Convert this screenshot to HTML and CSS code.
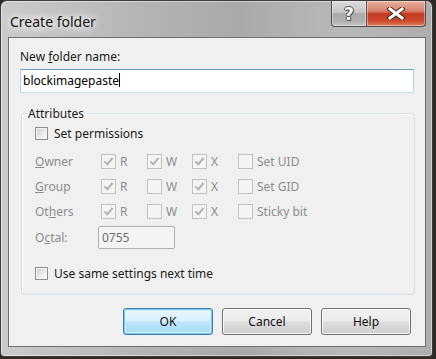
FILE: index.html
```html
<!DOCTYPE html>
<html lang="en">
<head>
  <meta charset="UTF-8" />
  <title>Create folder</title>
  <link rel="stylesheet" href="styles.css">
</head>
<body>
  <div class="window">
    <div class="titlebar">
      <span class="title">Create folder</span>
      <div class="caption-buttons">
        <span class="cap-btn help-btn">?</span>
        <span class="cap-btn close-btn">
          <svg width="20" height="13" viewBox="0 0 20 13">
            <path d="M4 2 L16 11 M16 2 L4 11" stroke="#4a2a22" stroke-width="5" stroke-linecap="square" fill="none"/>
            <path d="M4 2 L16 11 M16 2 L4 11" stroke="#fff" stroke-width="3" stroke-linecap="square" fill="none"/>
          </svg>
        </span>
      </div>
    </div>

    <div class="client">
      <div class="field-label">New <u>f</u>older name:</div>
      <div class="textbox focused">blockimagepaste<span class="caret"></span></div>

      <fieldset class="group">
        <legend>Attributes</legend>
        <label class="check"><span class="box"></span>Set permissions</label>

        <div class="perm-grid">
          <span class="row-label"><u>O</u>wner</span>
          <label class="check disabled"><span class="box checked"></span>R</label>
          <label class="check disabled"><span class="box checked"></span>W</label>
          <label class="check disabled"><span class="box checked"></span>X</label>
          <label class="check disabled"><span class="box"></span>Set UID</label>

          <span class="row-label"><u>G</u>roup</span>
          <label class="check disabled"><span class="box checked"></span>R</label>
          <label class="check disabled"><span class="box"></span>W</label>
          <label class="check disabled"><span class="box checked"></span>X</label>
          <label class="check disabled"><span class="box"></span>Set GID</label>

          <span class="row-label">Ot<u>h</u>ers</span>
          <label class="check disabled"><span class="box checked"></span>R</label>
          <label class="check disabled"><span class="box"></span>W</label>
          <label class="check disabled"><span class="box checked"></span>X</label>
          <label class="check disabled"><span class="box"></span>Sticky bit</label>
        </div>

        <div class="octal-row">
          <span class="row-label">O<u>c</u>tal:</span>
          <div class="textbox octal">0755</div>
        </div>

        <label class="check same-settings"><span class="box"></span>Use same settings next time</label>
      </fieldset>

      <div class="buttons">
        <button class="btn default">OK</button>
        <button class="btn">Cancel</button>
        <button class="btn">Help</button>
      </div>
    </div>
  </div>
</body>
</html>
```

FILE: styles.css
```css
body {
  margin: 0;
  background: #2e2a26;
  font-family: "Noto Sans", "Open Sans", sans-serif;
  font-size: 12px;
  color: #1a1a1a;
}
.window {
  width: 433px;
  height: 357px;
  box-sizing: border-box;
  border: 1px solid #3c3c3c;
  border-radius: 7px 7px 4px 4px;
  background: linear-gradient(to right, #cbcbcb, #b3b3b3 35%, #a9a9a9 55%, #b9b9b9 80%, #adadad);
  box-shadow: inset 0 0 0 1px rgba(255,255,255,0.45);
  padding: 0 6px 9px 7px;
  display: flex;
  flex-direction: column;
}
.titlebar {
  height: 36px;
  display: flex;
  justify-content: space-between;
  align-items: flex-start;
}
.title {
  padding: 10px 0 0 2px;
  font-size: 14px;
  line-height: 21px;
  color: #111;
  text-shadow: 0 0 6px #fff, 0 0 10px #fff, 0 0 16px #f2f2f2;
}
.caption-buttons {
  display: flex;
  height: 26px;
}
.cap-btn {
  display: flex;
  align-items: center;
  justify-content: center;
  box-sizing: border-box;
  height: 26px;
  border: 1px solid #4e4e4e;
  border-top: none;
  box-shadow: inset 0 0 0 1px rgba(255,255,255,0.4);
}
.help-btn {
  width: 35px;
  border-radius: 0 0 0 4px;
  border-right: none;
  background: linear-gradient(#dcdcdc, #c6c6c6 45%, #a9a9a9 52%, #b3b3b3 85%, #c9c9c9);
  color: #f4f4f4;
  font-family: "DejaVu Sans", sans-serif;
  font-weight: bold;
  font-size: 17px;
  text-shadow: 1px 0 #555, -1px 0 #555, 0 1px #555, 0 -1px #555, 1px 1px #666;
}
.close-btn {
  width: 60px;
  border-radius: 0 0 4px 0;
  background: linear-gradient(#e9b2a2, #d8806a 40%, #c0381f 52%, #cc4a2d 80%, #df8163);
}

.client {
  flex: 1;
  border: 1px solid #6e6e6e;
  background: #f0f0f0;
  padding: 11px 0 0 11px;
}
.field-label {
  line-height: 15px;
}
.textbox {
  box-sizing: border-box;
  height: 24px;
  line-height: 22px;
  padding-left: 2px;
  background: #fff;
  border: 1px solid #abadb3;
}
.textbox.focused {
  width: 394px;
  margin: 5px 0 13px;
  border-color: #6d9dcb #b9d3ea #c3dbef;
  color: #000;
}
.caret {
  display: inline-block;
  width: 1px;
  height: 14px;
  background: #000;
  vertical-align: -2px;
}

.group {
  width: 394px;
  box-sizing: border-box;
  margin: 0 0 0 1px;
  padding: 5px 0 13px 13px;
  border: 1px solid #d5dfe5;
  border-radius: 3px;
  box-shadow: inset 1px 1px 0 #fcfcfc;
}
.group legend {
  padding: 0 2px;
  margin-left: -9px;
  line-height: 15px;
}
.check {
  display: flex;
  align-items: center;
  line-height: 15px;
}
.box {
  position: relative;
  box-sizing: border-box;
  width: 13px;
  height: 13px;
  margin-right: 6px;
  border: 1px solid #8e8f8f;
  background: linear-gradient(135deg, #cfcfcf, #f2f2f2 70%, #fdfdfd);
  box-shadow: inset 0 0 0 1px #f4f4f4;
}
.check.disabled {
  color: #8d8d8d;
}
.check.disabled .box {
  width: 15px;
  height: 15px;
  margin-right: 4px;
  border-color: #c2c2c2;
  background: #f4f4f4;
  box-shadow: none;
}
.box.checked::after {
  content: "";
  position: absolute;
  left: 4px;
  top: 1px;
  width: 3px;
  height: 7px;
  border: solid #b4b4b4;
  border-width: 0 2px 2px 0;
  transform: rotate(40deg);
}
.perm-grid {
  display: grid;
  grid-template-columns: 66px 46px 45px 46px auto;
  grid-auto-rows: 25px;
  align-items: center;
  margin-top: 8px;
}
.row-label {
  color: #8d8d8d;
}
.octal-row {
  display: flex;
  align-items: center;
  margin-top: 2px;
}
.octal-row .row-label {
  width: 63px;
}
.textbox.octal {
  width: 77px;
  height: 23px;
  line-height: 21px;
  padding-left: 3px;
  background: #f4f4f4;
  border-color: #b0b0b0;
  border-radius: 2px;
  color: #6d6d6d;
}
.same-settings {
  margin-top: 17px;
}

.buttons {
  display: flex;
  justify-content: flex-end;
  gap: 9px;
  padding-right: 14px;
  margin-top: 13px;
}
.btn {
  width: 90px;
  height: 27px;
  font-family: "Noto Sans", "Open Sans", sans-serif;
  font-size: 12px;
  color: #111;
  border: 1px solid #707070;
  border-radius: 3px;
  background: linear-gradient(#f2f2f2, #ebebeb 48%, #dddddd 52%, #cfcfcf);
  box-shadow: inset 0 0 0 1px #fbfbfb;
  padding: 0;
}
.btn.default {
  border-color: #3c7fb1;
  background: linear-gradient(#eaf6fd, #d9f0fc 48%, #bee6fd 52%, #a7d9f5);
  box-shadow: inset 0 0 0 1px #78c8ef, inset 0 0 0 2px #d4eefc;
}
```
